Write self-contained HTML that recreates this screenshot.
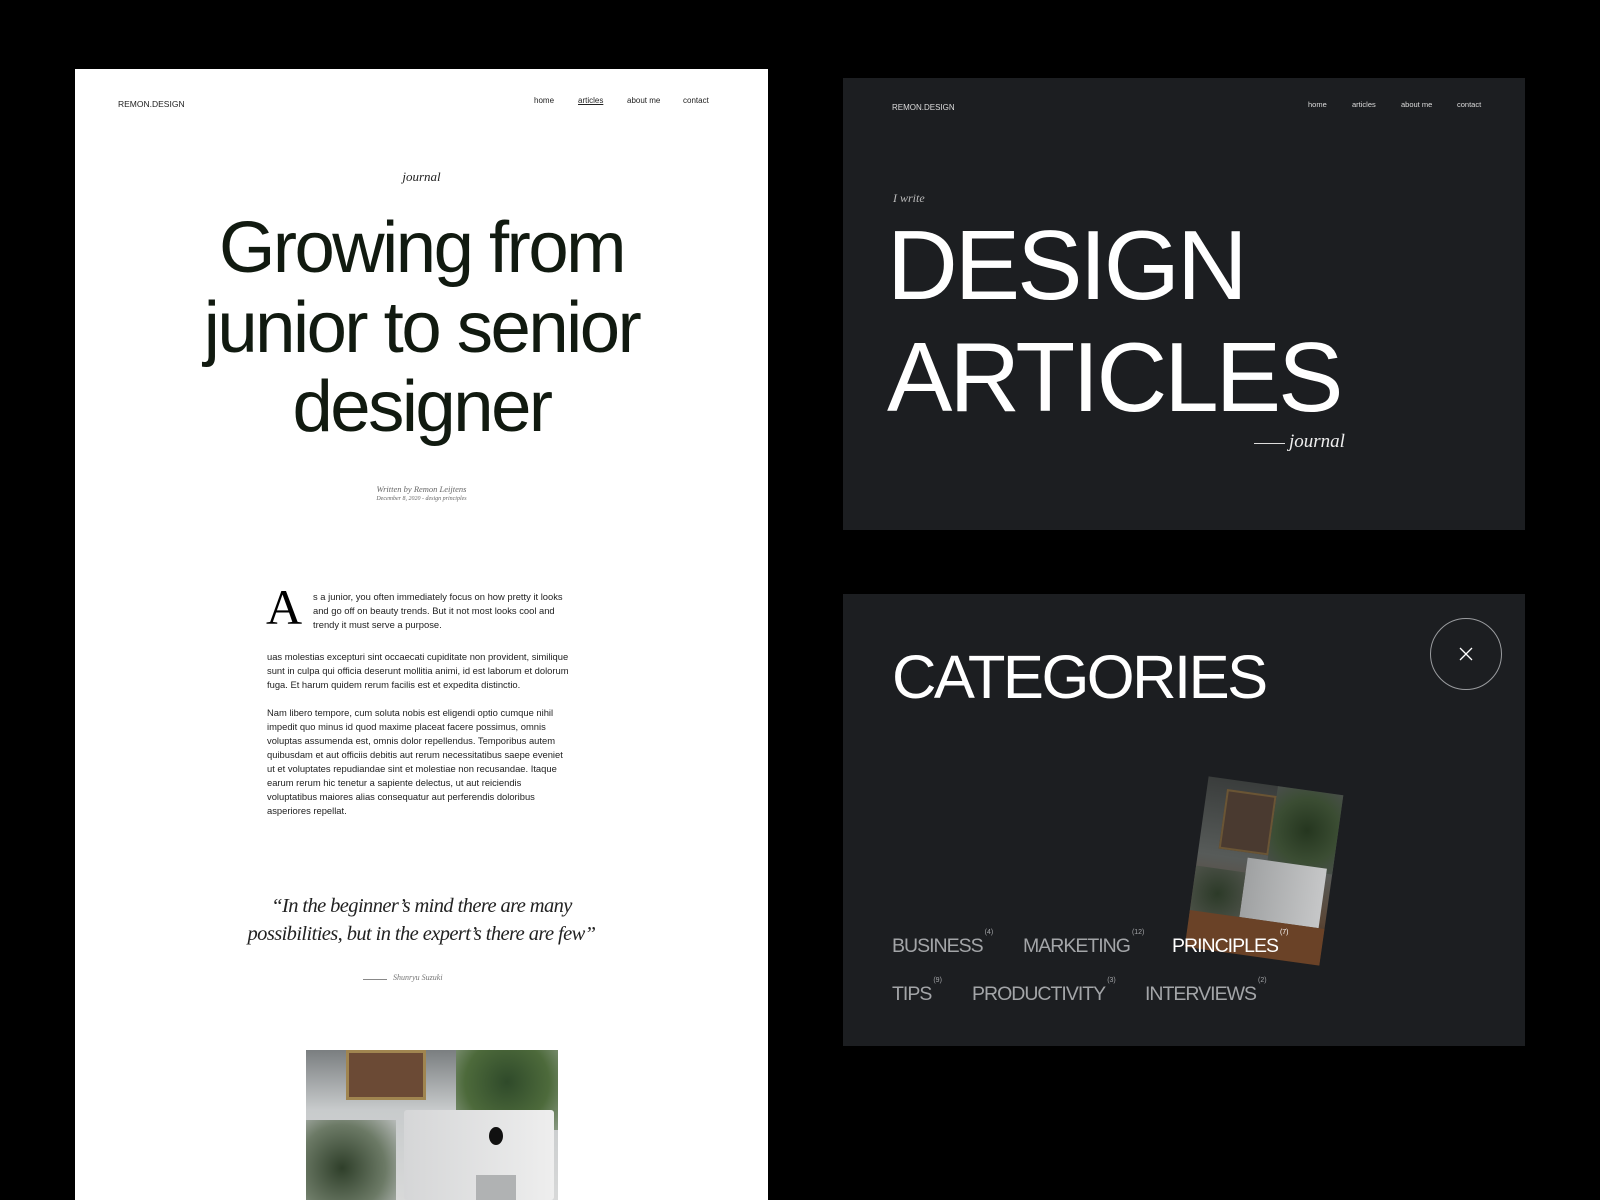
<!DOCTYPE html>
<html><head><meta charset="utf-8"><style>
*{margin:0;padding:0;box-sizing:border-box}
body{width:1600px;height:1200px;background:#000;position:relative;overflow:hidden;font-family:"Liberation Sans",sans-serif}
.a{position:absolute;white-space:nowrap}
.serif{font-family:"Liberation Serif",serif;font-style:italic}
#w{position:absolute;left:75px;top:69px;width:693px;height:1131px;background:#fff}
.d{position:absolute;left:843px;width:682px;height:452px;background:#1c1e21}
.p{font-size:9.4px;line-height:14px;color:#222;white-space:nowrap}
.h{font-size:72.5px;letter-spacing:-2.5px;color:#111a10;line-height:80px;text-align:center;width:693px;left:0}
.cat{font-size:19.5px;letter-spacing:-1px;color:#a3a5a8}
.cat sup{font-size:7px;letter-spacing:0;vertical-align:top;position:relative;top:-6px;margin-left:2px}
</style></head><body>
<div id="w">
 <div class="a" style="left:43px;top:30px;font-size:8.5px;color:#222">REMON.DESIGN</div>
 <div class="a" style="left:459px;top:27px;font-size:8px;color:#222">home</div>
 <div class="a" style="left:503px;top:27px;font-size:8px;color:#222;text-decoration:underline">articles</div>
 <div class="a" style="left:552px;top:27px;font-size:8px;color:#222">about me</div>
 <div class="a" style="left:608px;top:27px;font-size:8px;color:#222">contact</div>
 <div class="a serif" style="left:0;width:693px;text-align:center;top:100px;font-size:13px;color:#222">journal</div>
 <div class="a h" style="top:139px">Growing from</div>
 <div class="a h" style="top:219px">junior to senior</div>
 <div class="a h" style="top:298px">designer</div>
 <div class="a serif" style="left:0;width:693px;text-align:center;top:415px;font-size:8.5px;color:#666">Written by Remon Leijtens</div>
 <div class="a serif" style="left:0;width:693px;text-align:center;top:427px;font-size:6px;color:#666">December 8, 2020 - design principles</div>
 <div class="a" style="left:191px;top:513px;font-family:'Liberation Serif',serif;font-size:50px;color:#000;line-height:50px">A</div>
 <div class="a p" style="left:238px;top:521px">s a junior, you often immediately focus on how pretty it looks<br>and go off on beauty trends. But it not most looks cool and<br>trendy it must serve a purpose.</div>
 <div class="a p" style="left:192px;top:581px">uas molestias excepturi sint occaecati cupiditate non provident, similique<br>sunt in culpa qui officia deserunt mollitia animi, id est laborum et dolorum<br>fuga. Et harum quidem rerum facilis est et expedita distinctio.</div>
 <div class="a p" style="left:192px;top:637px">Nam libero tempore, cum soluta nobis est eligendi optio cumque nihil<br>impedit quo minus id quod maxime placeat facere possimus, omnis<br>voluptas assumenda est, omnis dolor repellendus. Temporibus autem<br>quibusdam et aut officiis debitis aut rerum necessitatibus saepe eveniet<br>ut et voluptates repudiandae sint et molestiae non recusandae. Itaque<br>earum rerum hic tenetur a sapiente delectus, ut aut reiciendis<br>voluptatibus maiores alias consequatur aut perferendis doloribus<br>asperiores repellat.</div>
 <div class="a serif" style="left:0;width:693px;text-align:center;top:823px;font-size:20.5px;line-height:28px;color:#222;letter-spacing:-0.6px">“In the beginner’s mind there are many<br>possibilities, but in the expert’s there are few”</div>
 <div class="a" style="left:288px;top:910px;width:24px;height:1px;background:#888"></div>
 <div class="a serif" style="left:318px;top:904px;font-size:8px;color:#777">Shunryu Suzuki</div>
 <div class="a" style="left:231px;top:981px;width:252px;height:150px;background:linear-gradient(180deg,#7a7e80 0%,#c8cbcc 40%,#d8d9d9 100%);overflow:hidden">
  <div class="a" style="left:40px;top:0;width:80px;height:50px;background:#6b4a35;border:3px solid #a08550"></div>
  <div class="a" style="left:150px;top:0;width:102px;height:80px;background:radial-gradient(circle at 50% 40%,#2f4a2a,#4d6a3b 60%,#8a9a84)"></div>
  <div class="a" style="left:0;top:70px;width:90px;height:80px;background:radial-gradient(circle at 40% 60%,#2f3f2a,#6c7a66 60%,#b7bbb9)"></div>
  <div class="a" style="left:98px;top:60px;width:150px;height:90px;background:linear-gradient(90deg,#d5d6d7,#eeeeee);border-radius:3px"></div>
  <div class="a" style="left:183px;top:77px;width:14px;height:18px;background:#111;border-radius:50%"></div>
  <div class="a" style="left:170px;top:125px;width:40px;height:25px;background:#b0b2b3"></div>
 </div>
</div>
<div class="d" style="top:78px">
 <div class="a" style="left:49px;top:25px;font-size:8px;color:#ddd">REMON.DESIGN</div>
 <div class="a" style="left:465px;top:22px;font-size:7.5px;color:#ddd">home</div>
 <div class="a" style="left:509px;top:22px;font-size:7.5px;color:#ddd">articles</div>
 <div class="a" style="left:558px;top:22px;font-size:7.5px;color:#ddd">about me</div>
 <div class="a" style="left:614px;top:22px;font-size:7.5px;color:#ddd">contact</div>
 <div class="a serif" style="left:50px;top:113px;font-size:12px;color:#bbb">I write</div>
 <div class="a" style="left:44px;top:128px;font-size:98px;line-height:118px;color:#fff;letter-spacing:-3px">DESIGN</div>
 <div class="a" style="left:44px;top:240px;font-size:98px;line-height:118px;color:#fff;letter-spacing:-3px">ARTICLES</div>
 <div class="a" style="left:411px;top:365px;width:31px;height:1px;background:#ddd"></div>
 <div class="a serif" style="left:446px;top:353px;font-size:19px;color:#eee">journal</div>
</div>
<div class="d" style="top:594px">
 <div class="a" style="left:49px;top:44px;font-size:61.5px;line-height:80px;color:#fff;letter-spacing:-2.5px">CATEGORIES</div>
 <div class="a" style="left:587px;top:24px;width:72px;height:72px;border:1px solid #9a9c9f;border-radius:50%"></div>
 <svg class="a" style="left:616px;top:53px" width="14" height="14"><path d="M1 1L13 13M13 1L1 13" stroke="#fff" stroke-width="1.3"/></svg>
 <div class="a" style="left:353px;top:191px;width:136px;height:172px;transform:rotate(8deg);background:linear-gradient(180deg,#3a3d3c 0%,#575b59 45%,#5a4636 75%,#2a221c 100%);overflow:hidden">
  <div class="a" style="left:20px;top:10px;width:50px;height:60px;background:#4a3a30;border:2px solid #6a5535"></div>
  <div class="a" style="left:70px;top:0;width:70px;height:80px;background:radial-gradient(circle,#25361f,#3b4d33 60%,#4a4f4c)"></div>
  <div class="a" style="left:50px;top:75px;width:80px;height:60px;background:linear-gradient(90deg,#9fa1a2,#c6c7c8)"></div>
  <div class="a" style="left:0;top:90px;width:50px;height:50px;background:radial-gradient(circle,#2c3a28,#4d5249)"></div>
  <div class="a" style="left:0;top:135px;width:136px;height:40px;background:#6a4227"></div>
 </div>
 <div class="a cat" style="left:49px;top:341px">BUSINESS<sup>(4)</sup></div>
 <div class="a cat" style="left:180px;top:341px">MARKETING<sup>(12)</sup></div>
 <div class="a cat" style="left:329px;top:341px;color:#fff">PRINCIPLES<sup>(7)</sup></div>
 <div class="a cat" style="left:49px;top:389px">TIPS<sup>(9)</sup></div>
 <div class="a cat" style="left:129px;top:389px">PRODUCTIVITY<sup>(3)</sup></div>
 <div class="a cat" style="left:302px;top:389px">INTERVIEWS<sup>(2)</sup></div>
</div>
</body></html>
